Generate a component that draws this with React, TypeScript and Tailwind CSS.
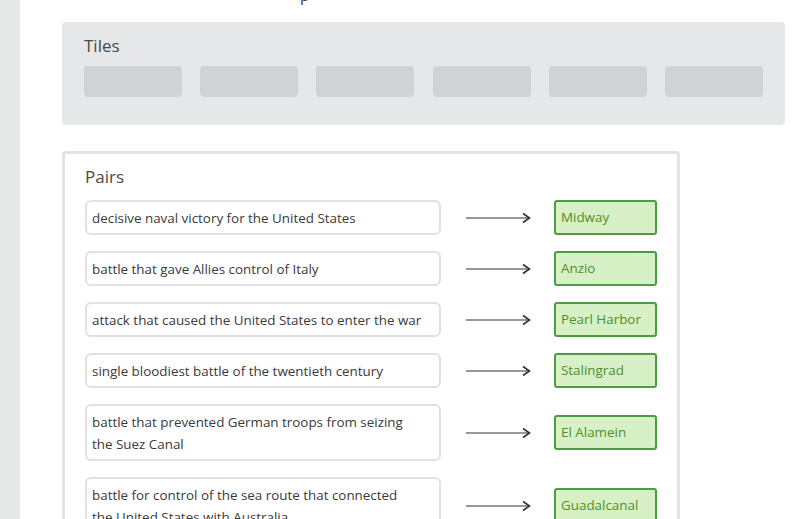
import React from "react";

const pairs = [
  { left: "decisive naval victory for the United States", right: "Midway" },
  { left: "battle that gave Allies control of Italy", right: "Anzio" },
  { left: "attack that caused the United States to enter the war", right: "Pearl Harbor" },
  { left: "single bloodiest battle of the twentieth century", right: "Stalingrad" },
  { left: "battle that prevented German troops from seizing the Suez Canal", right: "El Alamein" },
  { left: "battle for control of the sea route that connected\nthe United States with Australia", right: "Guadalcanal" },
];

function Arrow() {
  return (
    <svg width="66" height="12" viewBox="0 0 66 12" className="shrink-0 text-[#333]">
      <line x1="0" y1="6" x2="63" y2="6" stroke="currentColor" strokeWidth="1.2" />
      <path d="M57 1.5 L63.5 6 L57 10.5" fill="none" stroke="currentColor" strokeWidth="1.6" />
    </svg>
  );
}

export default function App() {
  return (
    <div className="w-[800px] h-[519px] overflow-hidden bg-white flex font-['Open_Sans',sans-serif] text-[#3f3f3f]">
      <div className="w-[20px] shrink-0 bg-[#e7e9e9]" />
      <div className="flex-1 pl-[42px] pr-[15px]">
        <div className="h-[22px] relative overflow-hidden">
          <span className="absolute left-[238px] top-[-16px] text-[15px] text-[#333]">p</span>
        </div>

        {/* Tiles */}
        <section className="bg-[#e6e7e8] rounded-[4px] h-[103px] px-[22px] pt-[12px]">
          <h2 className="text-[17px] leading-[24px] text-[#4a4a4a]">Tiles</h2>
          <div className="flex gap-[18.2px] mt-[8px]">
            {[0, 1, 2, 3, 4, 5].map((i) => (
              <div key={i} className="w-[98px] h-[31px] rounded-[4px] bg-[#d0d2d3]" />
            ))}
          </div>
        </section>

        {/* Pairs */}
        <section className="mt-[26px] w-[618px] border-[3px] border-[#e3e3e3] rounded-[4px] bg-white pl-[20px] pr-[20px] pt-[11px] pb-[20px]">
          <h2 className="text-[17px] leading-[24px] text-[#4a4a4a]">Pairs</h2>
          <div className="mt-[11px] flex flex-col gap-[16px]">
            {pairs.map((p) => (
              <div key={p.right} className="flex items-center">
                <div className="w-[356px] shrink-0 border-2 border-[#e1e1e1] rounded-[6px] pl-[5px] pr-[14px] py-[4.5px] text-[13.4px] leading-[22px] text-[#3a3a3a] whitespace-pre-line">
                  {p.left}
                </div>
                <div className="ml-[25px] mr-[22px] flex">
                  <Arrow />
                </div>
                <div className="w-[103px] h-[35px] shrink-0 border-2 border-[#4c9b45] rounded-[3px] bg-[#d8f0c6] px-[5px] flex items-center text-[13.4px] text-[#4f8f2b]">
                  {p.right}
                </div>
              </div>
            ))}
          </div>
        </section>
      </div>
    </div>
  );
}
